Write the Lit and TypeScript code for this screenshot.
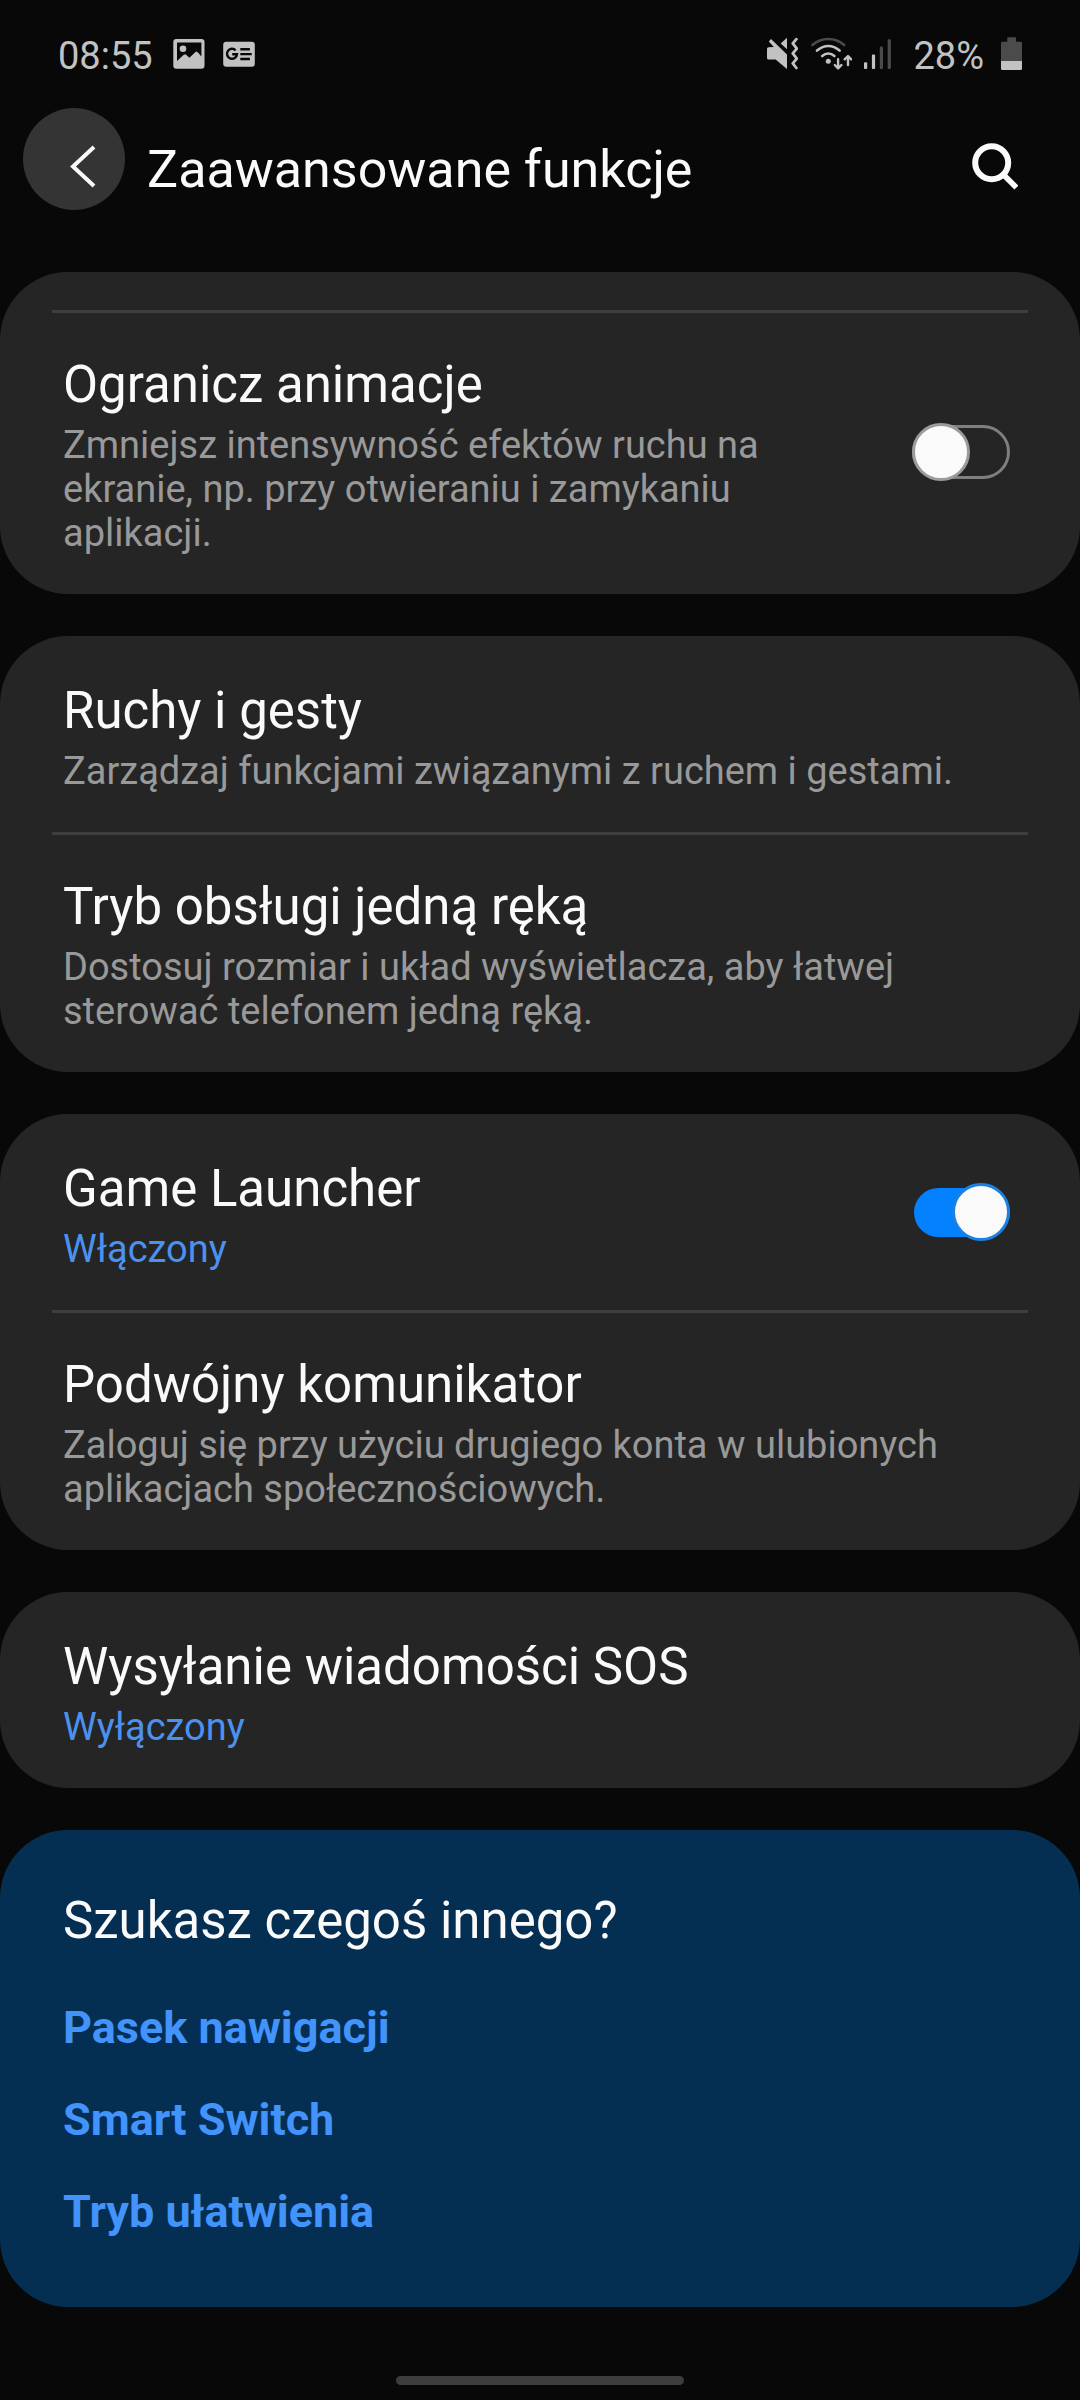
import { LitElement, html, css, nothing } from "lit";
import { customElement, property, state } from "lit/decorators.js";
import { classMap } from "lit/directives/class-map.js";

interface Item {
  id: string;
  title: string;
  note: string;
  status?: boolean;
  toggle?: boolean;
  on?: boolean;
}

const GROUPS: Item[][] = [
  [
    {
      id: "animations",
      title: "Ogranicz animacje",
      note: "Zmniejsz intensywność efektów ruchu na ekranie, np. przy otwieraniu i zamykaniu aplikacji.",
      toggle: true,
      on: false,
    },
  ],
  [
    { id: "motions", title: "Ruchy i gesty", note: "Zarządzaj funkcjami związanymi z ruchem i gestami." },
    {
      id: "one-hand",
      title: "Tryb obsługi jedną ręką",
      note: "Dostosuj rozmiar i układ wyświetlacza, aby łatwej sterować telefonem jedną ręką.",
    },
  ],
  [
    { id: "game", title: "Game Launcher", note: "Włączony", status: true, toggle: true, on: true },
    {
      id: "dual",
      title: "Podwójny komunikator",
      note: "Zaloguj się przy użyciu drugiego konta w ulubionych aplikacjach społecznościowych.",
    },
  ],
  [{ id: "sos", title: "Wysyłanie wiadomości SOS", note: "Wyłączony", status: true }],
];

const LINKS = ["Pasek nawigacji", "Smart Switch", "Tryb ułatwienia"];

@customElement("status-bar")
export class StatusBar extends LitElement {
  static styles = css`
    :host {
      display: flex;
      justify-content: space-between;
      padding: 34px 58px 0;
      font-size: 38px;
      line-height: 44px;
      color: #c2c2c2;
    }
    .side {
      display: flex;
      align-items: center;
    }
    .left {
      gap: 18px;
    }
    .right {
      gap: 12px;
    }
    .charge {
      margin: 0 5px 0 10px;
    }
    svg {
      display: block;
      height: 40px;
      fill: currentColor;
    }
    .line {
      fill: none;
      stroke: currentColor;
      stroke-linecap: round;
      stroke-linejoin: round;
    }
    .dim {
      opacity: 0.36;
    }
    .cut {
      fill: #080808;
    }
    .cut-line {
      fill: none;
      stroke: #080808;
    }
  `;

  render() {
    return html`
      <div class="side left">
        <span>08:55</span>
        <svg width="34" viewBox="-2 0 34 40" aria-hidden="true">
          <rect x="0.3" y="3" width="31.2" height="29.8" rx="3" />
          <path class="cut" d="M4 6.4h24.4v14L25 16.6l-2-1.2-6.6 6.4-3.6-3.4L11 18.6 4 25z" />
          <circle cx="10" cy="12.8" r="3.3" />
        </svg>
        <svg width="32" viewBox="0 0 32 40" aria-hidden="true">
          <rect x="0.2" y="5.8" width="31.6" height="25" rx="3" />
          <path class="cut-line" stroke-width="2.4" d="M12.6 14.3A5 5 0 1 0 14 18.2H9.2" />
          <path class="cut-line" stroke-width="2.4" d="M17.3 13.2h9.6M17.3 18.1h11.4M17.3 23h9.6" />
        </svg>
      </div>
      <div class="side right">
        <svg width="32" viewBox="0 0 32 40" aria-hidden="true">
          <path d="M2.5 11.2 7.8 11 2.8 5.4 5 3 21 18.6V33L9.6 23.5H2.5Q1 23.5 1 22V12.7Q1 11.2 2.5 11.2z" />
          <path d="M21 1.8V13.2L14.7 7.4z" />
          <path class="line" stroke-width="2.8" d="M30.4 3.2 26.8 7.4 30.8 12.6 26.8 17.4 30.8 22.6 26.8 27.4 30.4 32" />
        </svg>
        <svg width="42" viewBox="0 0 42 40" aria-hidden="true">
          <path class="line dim" stroke-width="2.6" d="M2.4 9Q9.3 3 18.3 3t15.9 6" />
          <path class="line" stroke-width="2.6" d="M7 14.6Q12.4 10 18.3 10t11.3 4.6" />
          <path class="line" stroke-width="2.6" d="M12.2 20Q15 17.5 18.3 17.5t6.1 2.5" />
          <circle cx="18.3" cy="25.2" r="2.5" />
          <path class="line" stroke-width="2.4" d="M28.1 23.3V32M24.8 29l3.3 3.3 3.3-3.3" />
          <path class="line" stroke-width="2.4" d="M38 29V20.2M34.7 23.3 38 20l3.2 3.3" />
        </svg>
        <svg width="27" viewBox="0 0 27 40" aria-hidden="true">
          <rect x="0" y="26.3" width="3.2" height="6.7" rx="1" />
          <rect x="7.9" y="18.4" width="3.2" height="14.6" rx="1" />
          <rect class="dim" x="15.8" y="10.6" width="3.2" height="22.4" rx="1" />
          <rect class="dim" x="23.7" y="3.2" width="3.2" height="29.8" rx="1" />
        </svg>
        <span class="charge">28%</span>
        <svg width="21" viewBox="0 0 21 40" aria-hidden="true">
          <path class="dim" d="M0 25V7q0-1.3 1.3-1.3h4.9V2.6q0-1.3 1.3-1.3h6.3q1.3 0 1.3 1.3v3.1h4.6Q21 5.7 21 7v18z" />
          <path d="M0 25h21v7.7q0 1.3-1.3 1.3H1.3Q0 34 0 32.7z" />
        </svg>
      </div>
    `;
  }
}

@customElement("setting-row")
export class SettingRow extends LitElement {
  @property({ attribute: false }) item!: Item;
  @state() private checked = false;

  willUpdate(changed: Map<string, unknown>) {
    if (changed.has("item")) this.checked = !!this.item.on;
  }

  static styles = css`
    :host {
      display: block;
    }
    .row {
      display: flex;
      align-items: center;
      gap: 64px;
      padding: 39px 70px 39px 63px;
      color: inherit;
      text-decoration: none;
    }
    .text {
      flex: 1;
      min-width: 0;
      display: flex;
      flex-direction: column;
      gap: 8px;
      padding-top: 6px;
    }
    .title {
      font-size: 51px;
      line-height: 60px;
      color: #fafafa;
    }
    .note {
      font-size: 38px;
      line-height: 44px;
      color: #999;
    }
    .note.status {
      color: #4b92f0;
    }
    .switch {
      appearance: none;
      flex: none;
      display: flex;
      align-items: center;
      width: 98px;
      height: 54px;
      margin: 0;
      border: 3px solid #7f7f7f;
      border-radius: 27px;
      box-sizing: border-box;
      cursor: pointer;
    }
    .switch::before {
      content: "";
      flex: none;
      width: 52px;
      height: 52px;
      margin: 0 -3px;
      border: 3px solid #9b9b9b;
      border-radius: 50%;
      background: #fafafa;
    }
    .switch:checked {
      justify-content: flex-end;
      width: 96px;
      height: 49px;
      border: 0;
      background: #0381fe;
    }
    .switch:checked::before {
      margin: 0;
      border-color: #1c80e2;
    }
  `;

  render() {
    const { id, title, note, status, toggle } = this.item;
    const text = html`
      <span class="text">
        <span class="title">${title}</span>
        <span class=${classMap({ note: true, status: !!status })}>${note}</span>
      </span>
    `;
    return toggle
      ? html`<label class="row" for=${id}>
          ${text}
          <input
            class="switch"
            type="checkbox"
            role="switch"
            id=${id}
            .checked=${this.checked}
            @change=${(e: Event) => (this.checked = (e.target as HTMLInputElement).checked)}
          />
        </label>`
      : html`<a class="row" href="#${id}">${text}</a>`;
  }
}

@customElement("app-root")
export class AppRoot extends LitElement {
  static styles = css`
    :host {
      display: flex;
      flex-direction: column;
      min-height: 100vh;
      background: #080808;
      color: #fafafa;
      font-family: Roboto, "Noto Sans", sans-serif;
    }
    .header {
      display: flex;
      align-items: flex-start;
      padding: 30px 62px 62px 23px;
    }
    .icon-button {
      flex: none;
      padding: 0;
      border: 0;
      background: none;
      color: inherit;
      cursor: pointer;
    }
    .icon-button svg {
      display: block;
      fill: none;
      stroke: currentColor;
    }
    .back {
      border-radius: 50%;
      background: #343434;
    }
    .search {
      margin-top: 34px;
    }
    .heading {
      flex: 1;
      margin: 32px 0 0 22px;
      font-size: 52px;
      font-weight: 400;
      line-height: 60px;
    }
    .groups {
      display: flex;
      flex-direction: column;
      gap: 42px;
    }
    .card {
      border-radius: 68px;
      background: #252525;
      overflow: hidden;
    }
    .card.continued {
      padding-top: 38px;
    }
    .divided {
      background: linear-gradient(#3e3e3e, #3e3e3e) center top / calc(100% - 104px) 3px no-repeat;
    }
    .related {
      padding: 61px 63px 65px;
      border-radius: 68px;
      background: #052f52;
    }
    .related-title {
      margin: 0 0 47px;
      font-size: 51px;
      font-weight: 400;
      line-height: 60px;
    }
    .links {
      display: flex;
      flex-direction: column;
      align-items: flex-start;
      gap: 32px;
      margin: 0;
      padding: 0;
      list-style: none;
    }
    .link {
      display: block;
      font-size: 45px;
      font-weight: 700;
      line-height: 60px;
      color: #4293fb;
      text-decoration: none;
    }
    .gesture {
      margin-top: auto;
      padding: 60px 0 15px;
    }
    .pill {
      width: 288px;
      height: 9px;
      margin: 0 auto;
      border-radius: 5px;
      background: #3c3c3c;
    }
  `;

  render() {
    return html`
      <status-bar></status-bar>
      <header class="header">
        <button class="icon-button back" type="button" aria-label="Wstecz">
          <svg width="102" height="102" viewBox="0 0 102 102" stroke-width="4">
            <path d="M71 39 50 58.5 71 78" />
          </svg>
        </button>
        <h1 class="heading">Zaawansowane funkcje</h1>
        <button class="icon-button search" type="button" aria-label="Szukaj">
          <svg width="48" height="48" viewBox="0 0 48 48" stroke-width="6">
            <circle cx="21.7" cy="20.8" r="16.5" />
            <path stroke-width="5.6" d="M33 32.2 46.4 45.6" />
          </svg>
        </button>
      </header>
      <main class="groups">
        ${GROUPS.map(
          (group, g) => html`
            <section class=${classMap({ card: true, continued: g === 0 })}>
              ${group.map(
                (item, i) => html`<setting-row
                  class=${g === 0 || i > 0 ? "divided" : nothing}
                  .item=${item}
                ></setting-row>`
              )}
            </section>
          `
        )}
        <section class="related">
          <h2 class="related-title">Szukasz czegoś innego?</h2>
          <ul class="links">
            ${LINKS.map((label) => html`<li><a class="link" href="#">${label}</a></li>`)}
          </ul>
        </section>
      </main>
      <div class="gesture"><div class="pill"></div></div>
    `;
  }
}
